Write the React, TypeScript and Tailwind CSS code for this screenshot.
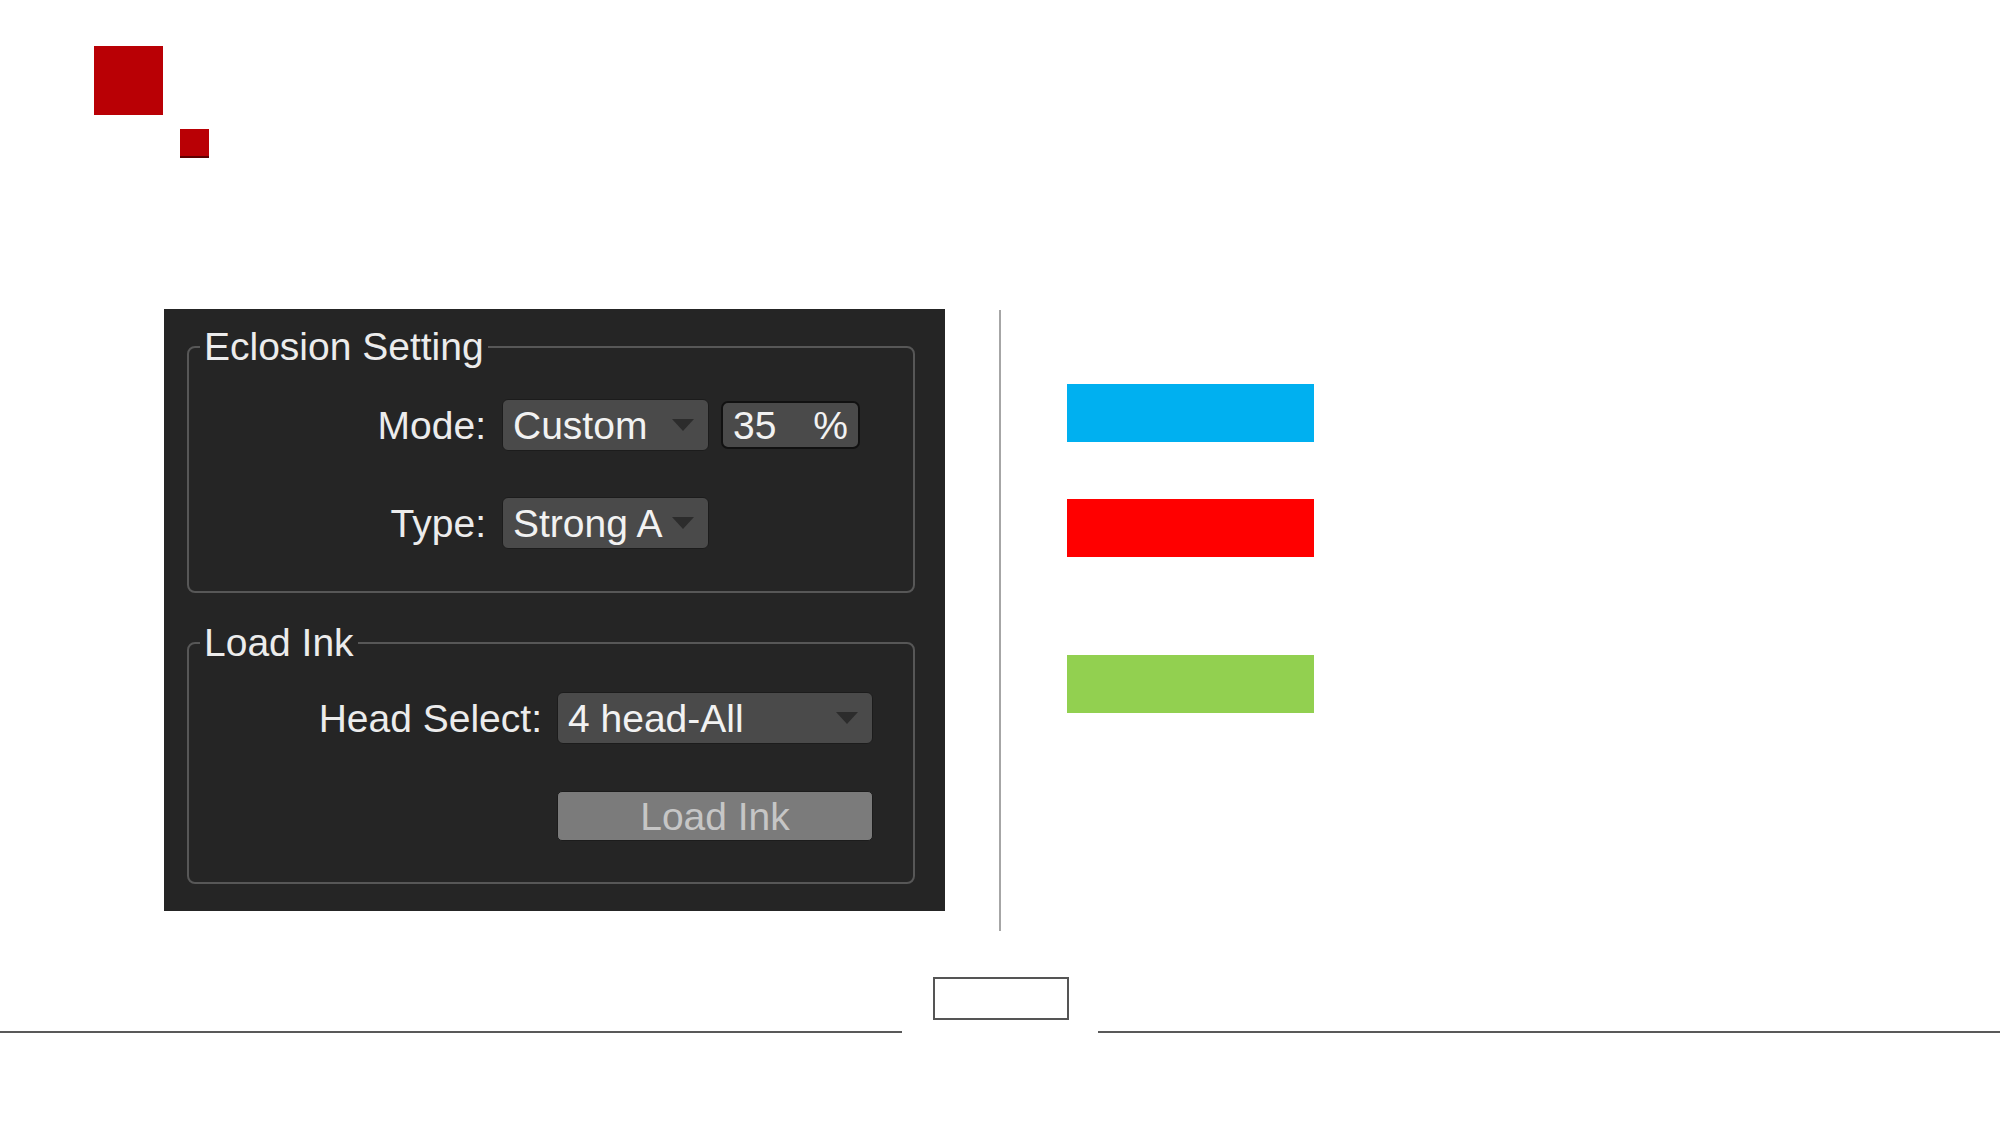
import { ReactNode } from 'react';

const font = { fontFamily: '"Liberation Sans", Arial, sans-serif' };

function Arrow() {
  return (
    <svg width="22" height="12" viewBox="0 0 22 12" className="shrink-0">
      <path d="M0 0 L22 0 L11 12 Z" fill="#2c2c2c" />
    </svg>
  );
}

function Dropdown({ value, width }: { value: string; width: string }) {
  return (
    <div
      className={`${width} h-[52px] flex items-center justify-between pl-[10px] pr-[14px] rounded-[6px] bg-[#4a4a4a] border border-[#1c1c1c] text-[#f2f2f2] text-[39px] leading-none`}
    >
      <span className="whitespace-nowrap">{value}</span>
      <Arrow />
    </div>
  );
}

function Group({ title, children }: { title: string; children: ReactNode }) {
  return (
    <fieldset className="w-[728px] ml-[23px] border-2 border-[#575757] rounded-[8px]">
      <legend className="ml-[11px] px-[4px] text-[39px] leading-[46px] text-[#ececec]">{title}</legend>
      {children}
    </fieldset>
  );
}

export default function App() {
  return (
    <div className="w-[2000px] h-[1125px] bg-white overflow-hidden" style={font}>
      {/* logo squares */}
      <div className="pt-[46px] pl-[94px]">
        <div className="w-[69px] h-[69px] bg-[#b90005]" />
        <div className="ml-[86px] mt-[14px] w-[29px] h-[29px] bg-[#b90005] border-b-2 border-[#5c0000]" />
      </div>

      <div className="flex items-start mt-[151px]">
        {/* settings panel */}
        <div className="ml-[164px] w-[781px] bg-[#252525] pt-[15px] pb-[27px]">
          <Group title="Eclosion Setting">
            <div className="pt-[29px] pb-[42px] flex flex-col gap-[46px]">
              <div className="flex items-center">
                <div className="w-[297px] text-right text-[39px] leading-none text-[#ececec]">Mode:</div>
                <div className="ml-[16px] flex items-center gap-[12px]">
                  <Dropdown value="Custom" width="w-[207px]" />
                  <div className="w-[139px] h-[48px] flex items-center justify-between pl-[10px] pr-[10px] rounded-[7px] bg-[#4a4a4a] border-2 border-[#111111] text-[#f2f2f2] text-[39px] leading-none">
                    <span>35</span>
                    <span>%</span>
                  </div>
                </div>
              </div>
              <div className="flex items-center">
                <div className="w-[297px] text-right text-[39px] leading-none text-[#ececec]">Type:</div>
                <div className="ml-[16px]">
                  <Dropdown value="Strong A" width="w-[207px]" />
                </div>
              </div>
            </div>
          </Group>

          <div className="mt-[27px]">
            <Group title="Load Ink">
              <div className="pt-[26px] pb-[41px] flex flex-col gap-[47px]">
                <div className="flex items-center">
                  <div className="w-[353px] text-right text-[39px] leading-none text-[#ececec]">Head Select:</div>
                  <div className="ml-[15px]">
                    <Dropdown value="4 head-All" width="w-[316px]" />
                  </div>
                </div>
                <div className="ml-[368px]">
                  <button className="w-[316px] h-[50px] rounded-[5px] bg-[#7b7b7b] border border-[#1c1c1c] text-[#c6c6c6] text-[39px] leading-none flex items-center justify-center">
                    Load Ink
                  </button>
                </div>
              </div>
            </Group>
          </div>
        </div>

        {/* divider */}
        <div className="ml-[54px] mt-[1px] w-[2px] h-[621px] bg-[#a6a6a6]" />

        {/* colour bars */}
        <div className="ml-[66px] mt-[75px] flex flex-col">
          <div className="w-[247px] h-[58px] bg-[#00b0f0]" />
          <div className="mt-[57px] w-[247px] h-[58px] bg-[#ff0000]" />
          <div className="mt-[98px] w-[247px] h-[58px] bg-[#92d050]" />
        </div>
      </div>

      {/* footer */}
      <div className="mt-[46px] ml-[933px] w-[136px] h-[43px] border-2 border-[#555555]" />
      <div className="mt-[11px] flex items-center">
        <div className="w-[902px] h-[2px] bg-[#595959]" />
        <div className="w-[196px]" />
        <div className="flex-1 h-[2px] bg-[#595959]" />
      </div>
    </div>
  );
}
